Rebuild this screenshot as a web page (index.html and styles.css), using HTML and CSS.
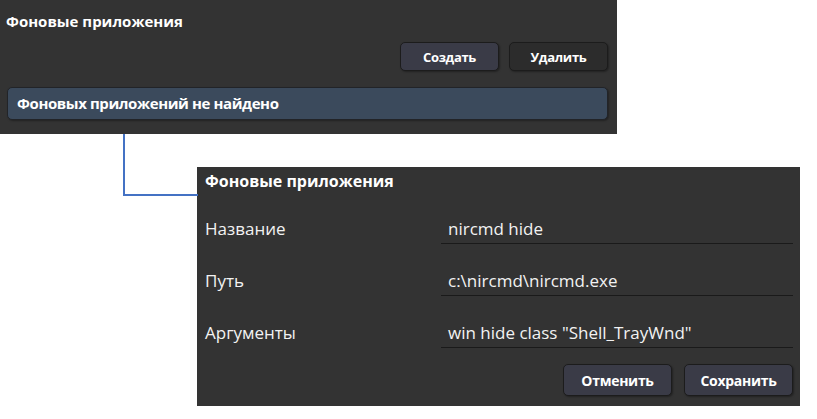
FILE: index.html
```html
<!DOCTYPE html>
<html lang="ru">
<head>
<meta charset="utf-8">
<title>Фоновые приложения</title>
<link rel="stylesheet" href="styles.css">
</head>
<body>
<section class="panel panel-list">
  <h2 class="panel-title">Фоновые приложения</h2>
  <div class="actions">
    <button class="btn btn-primary">Создать</button>
    <button class="btn">Удалить</button>
  </div>
  <div class="empty">Фоновых приложений не найдено</div>
</section>

<svg class="connector" width="80" height="64" viewBox="0 0 80 64">
  <polyline points="2,0 2,61 76,61" fill="none" stroke="#4472c4" stroke-width="2"/>
</svg>

<section class="panel panel-form">
  <h2 class="form-title">Фоновые приложения</h2>
  <div class="form-row">
    <span class="label">Название</span>
    <span class="field">nircmd hide</span>
  </div>
  <div class="form-row">
    <span class="label">Путь</span>
    <span class="field">c:\nircmd\nircmd.exe</span>
  </div>
  <div class="form-row">
    <span class="label">Аргументы</span>
    <span class="field">win hide class "Shell_TrayWnd"</span>
  </div>
  <div class="form-actions">
    <button class="btn btn-lg btn-primary">Отменить</button>
    <button class="btn btn-lg btn-primary">Сохранить</button>
  </div>
</section>
</body>
</html>
```
FILE: styles.css
```css
html, body {
  margin: 0;
  padding: 0;
  background: #ffffff;
}
body {
  position: relative;
  width: 817px;
  height: 419px;
  overflow: hidden;
  font-family: "Open Sans", "Noto Sans", sans-serif;
  color: #ffffff;
}
.panel {
  background: #333333;
  box-sizing: border-box;
}
.panel-list {
  width: 617px;
  height: 134px;
  padding: 11px 9px 0 6px;
}
.panel-title {
  margin: 0;
  font-size: 15px;
  font-weight: 700;
  line-height: 20px;
}
.actions {
  display: flex;
  justify-content: flex-end;
  gap: 10px;
  margin-top: 11px;
}
.btn {
  font-family: inherit;
  color: #ffffff;
  font-weight: 700;
  font-size: 13px;
  letter-spacing: -0.3px;
  width: 99px;
  height: 29px;
  border: 1px solid #1c1c1c;
  border-radius: 5px;
  background: #2c2c2c;
  box-shadow: 1px 1px 2px rgba(0,0,0,0.35);
  padding: 0;
}
.btn-primary {
  background: #3a3b47;
}
.empty {
  margin: 16px 0 0 1px;
  height: 33px;
  box-sizing: border-box;
  width: 601px;
  background: #3b4a5c;
  border: 1px solid #222428;
  border-radius: 5px;
  box-shadow: 1px 1px 2px rgba(0,0,0,0.35);
  padding-left: 9px;
  font-size: 15px;
  font-weight: 700;
  line-height: 31px;
  letter-spacing: -0.4px;
}
.connector {
  position: absolute;
  left: 122px;
  top: 134px;
}
.panel-form {
  width: 603px;
  height: 239px;
  margin: 33px 0 0 197px;
  padding: 4px 7px 0 8px;
}
.form-title {
  margin: 0;
  font-size: 16px;
  font-weight: 700;
  line-height: 20px;
}
.form-row {
  display: grid;
  grid-template-columns: 236px 1fr;
  margin-top: 23px;
  height: 29px;
}
.form-row:first-of-type {
  margin-top: 24px;
}
.label {
  font-size: 17px;
  line-height: 28px;
  color: #f2f2f2;
}
.field {
  font-size: 17px;
  line-height: 28px;
  padding-left: 7px;
  border-bottom: 1px solid #1a1a1a;
  color: #f2f2f2;
}
.form-actions {
  display: flex;
  justify-content: flex-end;
  gap: 12px;
  margin-top: 16px;
}
.btn-lg {
  width: 109px;
  height: 32px;
  font-size: 14px;
}
```
